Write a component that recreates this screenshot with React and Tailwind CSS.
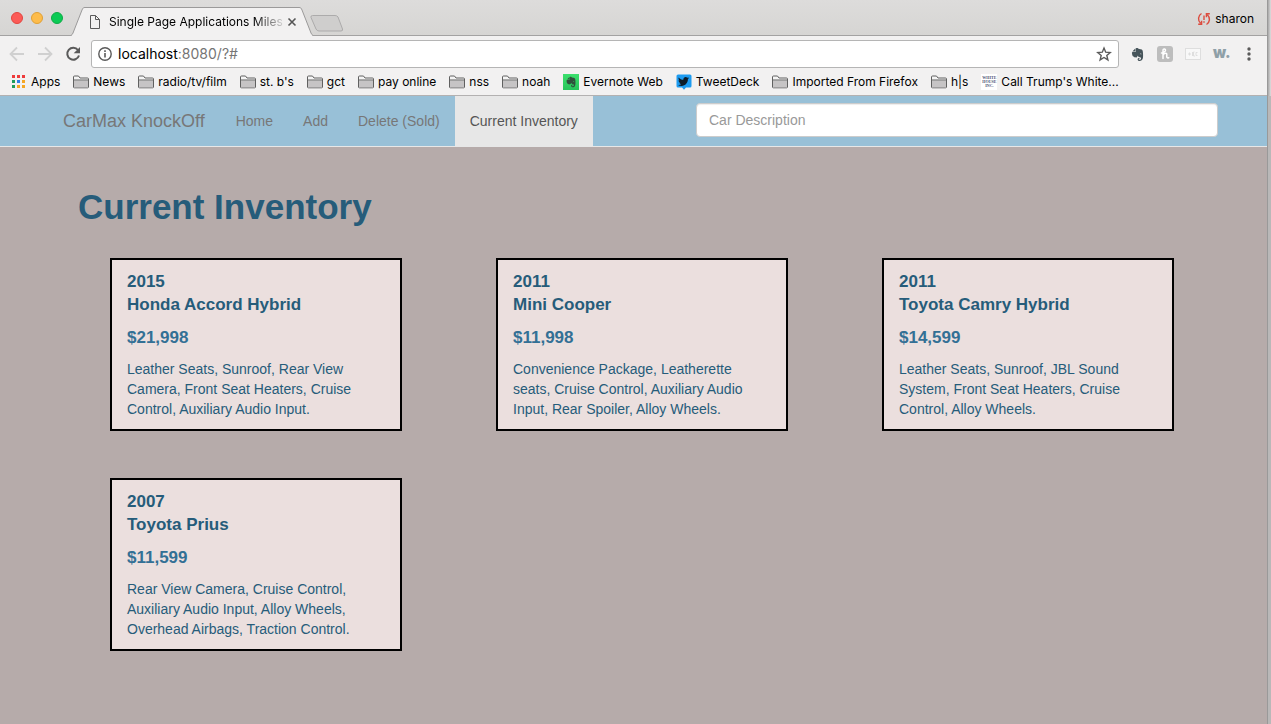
import React from "react";
import { FaEvernote, FaTwitter } from "react-icons/fa";

const folder = (
  <svg width="16" height="14" viewBox="0 0 16 14" className="shrink-0" aria-hidden="true">
    <path d="M.5 12V2Q.5 1 1.5 1H5.5L7 3H14.5Q15.5 3 15.5 4V12Q15.5 12.8 14.7 12.8H1.3Q.5 12.8 .5 12Z" fill="#f4f4f4" stroke="#606060" />
    <path d="M1 5.5H15V12.3H1Z" fill="#c6c4c5" />
    <path d="M.5 5H15.5" stroke="#606060" />
  </svg>
);

const apps = (
  <svg width="16" height="14" viewBox="0 0 16 14" className="shrink-0" aria-hidden="true">
    {["#ee3b3b", "#ee3b3b", "#ee3b3b", "#1f9d5c", "#2f7fe8", "#f5a623", "#1f9d5c", "#f5a623", "#f5a623"].map((c, i) => (
      <rect key={i} x={(i % 3) * 5 + 1} y={Math.floor(i / 3) * 5} width="3" height="3" fill={c} />
    ))}
  </svg>
);

const evernote = (
  <span className="flex size-4 shrink-0 items-center justify-center bg-gradient-to-b from-[#3be06d] to-[#27c45a] text-[12px] text-[#30503d]" aria-hidden="true">
    <FaEvernote />
  </span>
);

const tweetdeck = (
  <span className="relative flex size-4 shrink-0 items-center justify-center pb-px text-[11px] text-[#0d1c28]" aria-hidden="true">
    <svg className="absolute inset-0" width="16" height="16" viewBox="0 0 16 16">
      <path d="M2 .5H14Q15.5 .5 15.5 2V12Q15.5 13.5 14 13.5H10L8 15.8L6 13.5H2Q.5 13.5 .5 12V2Q.5 .5 2 .5Z" fill="#1d9bf0" />
    </svg>
    <FaTwitter className="relative" />
  </span>
);

const whiteHouse = (
  <span className="flex size-4 shrink-0 flex-col items-center justify-center bg-white font-['Liberation_Serif',serif] text-[4px] leading-[4px] font-bold text-[#4b5273]" aria-hidden="true">
    <span>WHITE</span>
    <span>HOUSE</span>
    <span>INC.</span>
  </span>
);

const bookmarks = [
  ["Apps", apps],
  ["News", folder],
  ["radio/tv/film", folder],
  ["st. b's", folder],
  ["gct", folder],
  ["pay online", folder],
  ["nss", folder],
  ["noah", folder],
  ["Evernote Web", evernote],
  ["TweetDeck", tweetdeck],
  ["Imported From Firefox", folder],
  ["h|s", folder],
  ["Call Trump's White...", whiteHouse],
];

const cars = [
  { year: 2015, name: "Honda Accord Hybrid", price: "$21,998", features: "Leather Seats, Sunroof, Rear View Camera, Front Seat Heaters, Cruise Control, Auxiliary Audio Input." },
  { year: 2011, name: "Mini Cooper", price: "$11,998", features: "Convenience Package, Leatherette seats, Cruise Control, Auxiliary Audio Input, Rear Spoiler, Alloy Wheels." },
  { year: 2011, name: "Toyota Camry Hybrid", price: "$14,599", features: "Leather Seats, Sunroof, JBL Sound System, Front Seat Heaters, Cruise Control, Alloy Wheels." },
  { year: 2007, name: "Toyota Prius", price: "$11,599", features: "Rear View Camera, Cruise Control, Auxiliary Audio Input, Alloy Wheels, Overhead Airbags, Traction Control." },
];

function TabStrip() {
  return (
    <div className="relative flex h-9 items-stretch bg-gradient-to-b from-[#dddcdb] to-[#d6d5d3]">
      <div className="absolute inset-x-0 bottom-0 h-px bg-[#a3a2a2]" />
      <div className="flex items-center gap-2 pl-[11px]">
        <button aria-label="Close window" className="size-3 rounded-full border border-[#e2463f] bg-[#fc5b57]" />
        <button aria-label="Minimize window" className="size-3 rounded-full border border-[#e0a035] bg-[#fdbc4b]" />
        <button aria-label="Zoom window" className="size-3 rounded-full border border-[#0faa46] bg-[#0bcb55]" />
      </div>
      <div className="relative ml-2 flex w-[242px] items-center pt-2">
        <svg className="absolute inset-0" width="242" height="36" viewBox="0 0 242 36" aria-hidden="true">
          <path d="M0 36C1 35 1.500 34 2 33L11 10C12 8 12 7.500 14 7.500H228C230 7.500 230 8 231 10L240 33C240.500 34 241 35 242 36Z" fill="#f2f1f1" />
          <path d="M0 35.500C1 35 1.500 34 2 33L11 10C12 8 12 7.500 14 7.500H228C230 7.500 230 8 231 10L240 33C240.500 34 241 35 242 35.500" fill="none" stroke="#9b9a9a" />
        </svg>
        <svg className="relative ml-[18px] shrink-0" width="12" height="14" viewBox="0 0 12 14" fill="none" stroke="#5a5a5a" aria-hidden="true">
          <path d="M1.500.500H6.500L10.500 4.500V13.500H1.500ZM6.500.500V4.500H10.500" />
        </svg>
        <span className="relative ml-2 w-[174px] text-[12px] whitespace-nowrap text-black [mask-image:linear-gradient(to_right,black_145px,transparent_178px)]">Single Page Applications Miles</span>
        <button aria-label="Close tab" className="relative ml-1">
          <svg width="10" height="10" viewBox="0 0 10 10" stroke="#555" strokeWidth="1.600" aria-hidden="true">
            <path d="M1.500 1.500 8.500 8.500M8.500 1.500 1.500 8.500" />
          </svg>
        </button>
      </div>
      <button aria-label="New tab" className="relative -ml-[3px] pt-[10px]">
        <svg width="34" height="17" viewBox="0 0 34 17" fill="#cfcecd" stroke="#acabab" aria-hidden="true">
          <path d="M2.500.500H25Q27 .500 28 2L32.500 14Q33 16 31 16H9Q7 16 6 14L1 2.500Q.500 .500 2.500.500Z" />
        </svg>
      </button>
      <button className="ml-auto flex items-center gap-1 pt-px pr-[13px] text-[12px] text-black">
        <svg width="14" height="14" viewBox="0 0 14 14" fill="none" stroke="#dc4b3e" strokeWidth="1.400" aria-hidden="true">
          <path d="M4.500 1.500C1 3.500 .5 8.500 3.600 11.300M4.600 8.800V12.200H1.200M9.500 12.500C13 10.500 13.500 5.500 10.400 2.700M9.400 5.200V1.800H12.800M7 3.500V8M7 9.300V10.800" />
        </svg>
        sharon
      </button>
    </div>
  );
}

function Toolbar() {
  return (
    <div className="flex h-9 items-center bg-[#f2f1f1] pr-[11px] pl-2">
      <button aria-label="Back" className="flex w-7">
        <svg width="18" height="16" viewBox="0 0 18 16" fill="none" stroke="#d0d0d0" strokeWidth="1.800" aria-hidden="true"><path d="M16 8H3M9 1.500 2.500 8 9 14.500" /></svg>
      </button>
      <button aria-label="Forward" className="flex w-7">
        <svg width="18" height="16" viewBox="0 0 18 16" fill="none" stroke="#d0d0d0" strokeWidth="1.800" aria-hidden="true"><path d="M2 8H15M9 1.500 15.500 8 9 14.500" /></svg>
      </button>
      <button aria-label="Reload" className="flex w-[27px]">
        <svg width="18" height="16" viewBox="0 0 18 16" fill="none" aria-hidden="true">
          <path d="M14 4A6 6 0 1 0 15 9.500" stroke="#5a5a5a" strokeWidth="2" />
          <path d="M16 1V7.300H9.700Z" fill="#5a5a5a" />
        </svg>
      </button>
      <div className="flex h-7 flex-1 items-center rounded-[3px] border border-[#b5b5b5] bg-white px-[6px]">
        <svg width="14" height="14" viewBox="0 0 14 14" fill="none" stroke="#5a5a5a" aria-hidden="true">
          <circle cx="7" cy="7" r="6.200" strokeWidth="1.400" />
          <path d="M7 6V10.500M7 3.300V4.900" strokeWidth="1.600" />
        </svg>
        <button aria-label="Address, localhost:8080/?#" className="ml-[6px] flex-1 text-left text-[14px] leading-5 text-[#757575]">
          <span className="text-black">localhost</span>:8080/?#
        </button>
        <button aria-label="Bookmark this page">
          <svg width="16" height="16" viewBox="0 0 16 16" fill="none" stroke="#5a5a5a" strokeWidth="1.400" aria-hidden="true"><path d="M8 2 9.700 6.200 14.200 6.500 10.800 9.400 11.900 13.900 8 11.500 4.100 13.900 5.200 9.400 1.800 6.500 6.300 6.200Z" /></svg>
        </button>
      </div>
      <div className="ml-[10px] flex items-center gap-3">
        <button aria-label="Evernote Web Clipper" className="flex size-4 items-center justify-center text-[15px] text-[#46545a]">
          <FaEvernote aria-hidden="true" />
        </button>
        <button aria-label="Honey">
          <svg width="16" height="16" viewBox="0 0 16 16" aria-hidden="true">
            <rect width="16" height="16" rx="3" fill="#bdbdbd" />
            <path d="M6 12.500V4.500Q6 2.800 7.500 3Q9 3.400 8.200 5.200Q7 7 4.500 7M6 9Q7.500 7 9 7.300Q10.200 7.600 9.800 9.500Q9.300 12.500 11.800 11.800" fill="none" stroke="#fff" strokeWidth="1.500" strokeLinecap="round" />
          </svg>
        </button>
        <button aria-label="Extension">
          <svg width="16" height="12" viewBox="0 0 16 12" fill="none" stroke="#dedede" aria-hidden="true"><rect x=".5" y=".5" width="15" height="11" fill="#f8f8f8" /><path d="M3 6H6M4.500 4.500V7.500M7.500 4V8M9.500 4H8.500V8H10M12.500 4.500H11V7.500H12.500" /></svg>
        </button>
        <button aria-label="Wikiwand" className="flex h-4 w-[17px] items-center pb-[3px] text-[15px] leading-4 font-black text-[#8fa0a8]">w.</button>
        <button aria-label="Chrome menu">
          <svg width="14" height="16" viewBox="0 0 14 16" fill="#5a5a5a" aria-hidden="true"><circle cx="7" cy="3" r="1.700" /><circle cx="7" cy="8" r="1.700" /><circle cx="7" cy="13" r="1.700" /></svg>
        </button>
      </div>
    </div>
  );
}

export default function App() {
  return (
    <div className="flex min-h-screen bg-[#b6abaa]">
      <div className="flex min-w-0 flex-1 flex-col">
        <header className="font-['Inter',sans-serif]">
          <TabStrip />
          <Toolbar />
          <nav aria-label="Bookmarks" className="flex h-6 items-center gap-[13px] overflow-hidden border-b border-[#b3b1b1] bg-[#f2f1f1] pb-1 pl-[11px] text-[12px] leading-5 whitespace-nowrap text-black">
            {bookmarks.map(([label, icon]) => (
              <a key={label} href="#" className="flex items-center gap-1">{icon}{label}</a>
            ))}
          </nav>
        </header>
        <div className="font-['Liberation_Sans',Arial,sans-serif] text-[14px] leading-5">
          <nav aria-label="Main" className="border-b border-[#e7e7e7] bg-[#98c0d7] text-[#777]">
            <div className="mx-auto flex max-w-[1171px] items-center pr-px">
              <a href="#" className="py-[15px] pr-4 pl-[15px] text-[18px]">CarMax KnockOff</a>
              <a href="#" className="p-[15px]">Home</a>
              <a href="#" className="p-[15px]">Add</a>
              <a href="#" className="p-[15px]">Delete (Sold)</a>
              <a href="#" className="bg-[#e7e7e7] p-[15px] text-[#555]">Current Inventory</a>
              <input aria-label="Car Description" placeholder="Car Description" className="mt-[7px] ml-auto h-[34px] w-[522px] self-start rounded-[4px] border border-[#ccc] bg-white px-3 shadow-[inset_0_1px_1px_rgba(0,0,0,0.075)] placeholder:text-[#999]" />
            </div>
          </nav>
          <main className="mx-auto max-w-[1171px] text-[#265c7a]">
            <h1 className="pt-10 pl-[30px] text-[35px] leading-10 font-bold">Current Inventory</h1>
            <div className="grid grid-cols-3 gap-x-[94px] gap-y-[47px] pt-[31px] pr-[45px] pb-12 pl-[62px]">
              {cars.map((car) => (
                <article key={car.name} className="border-2 border-black bg-[#ebdfde] px-[15px] py-[10px]">
                  <h2 className="text-[17px] leading-[23px] font-bold">{car.year}<br />{car.name}</h2>
                  <p className="pt-[10px] text-[17px] leading-[23px] font-bold text-[#337095]">{car.price}</p>
                  <p className="pt-[10px]">{car.features}</p>
                </article>
              ))}
            </div>
          </main>
        </div>
      </div>
      <div className="flex w-1 flex-col border-l border-[#999] bg-[#b9b8b8]">
        <div className="h-24 bg-gradient-to-r from-[#a9a8a8] to-[#dedede]" />
      </div>
    </div>
  );
}
